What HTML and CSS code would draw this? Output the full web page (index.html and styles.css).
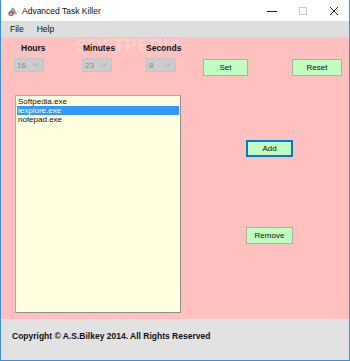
FILE: index.html
```html
<!DOCTYPE html>
<html lang="en">
<head>
    <meta charset="UTF-8">
    <title>Advanced Task Killer</title>
    <link rel="stylesheet" href="styles.css">
</head>
<body>

<div class="window">
    <div class="titlebar">
        <svg class="app-icon" width="11" height="10" viewBox="0 0 11 10">
            <path d="M1 8 L5 2 Q6 1 7 2 L10 8 Z" fill="#8fa6bd"/>
            <circle cx="4" cy="7.5" r="2" fill="none" stroke="#d23a2a" stroke-width="1.2"/>
        </svg>
        <span class="title">Advanced Task Killer</span>
        <div class="win-buttons">
            <span class="win-btn">
                <svg width="10" height="10" viewBox="0 0 10 10"><path d="M0 5.5 H10" stroke="#222" stroke-width="1"/></svg>
            </span>
            <span class="win-btn">
                <svg width="10" height="10" viewBox="0 0 10 10"><rect x="1.5" y="1.5" width="7" height="7" fill="none" stroke="#c8c8c8" stroke-width="1"/></svg>
            </span>
            <span class="win-btn">
                <svg width="10" height="10" viewBox="0 0 10 10"><path d="M1 1 L9 9 M9 1 L1 9" stroke="#222" stroke-width="1"/></svg>
            </span>
        </div>
    </div>

    <div class="menubar">
        <span class="menu-item">File</span>
        <span class="menu-item">Help</span>
    </div>

    <div class="main">
        <div class="watermark">SOFTPEDIA</div>

        <div class="timer-grid">
            <div class="lbl lbl-hours">Hours</div>
            <div class="lbl lbl-minutes">Minutes</div>
            <div class="lbl">Seconds</div>
            <div></div>
            <div></div>

            <div class="combo"><span>16</span><svg width="7" height="4" viewBox="0 0 7 4"><path d="M0.5 0.5 L3.5 3.5 L6.5 0.5" fill="none" stroke="#a8a8a8"/></svg></div>
            <div class="combo"><span>23</span><svg width="7" height="4" viewBox="0 0 7 4"><path d="M0.5 0.5 L3.5 3.5 L6.5 0.5" fill="none" stroke="#a8a8a8"/></svg></div>
            <div class="combo"><span>8</span><svg width="7" height="4" viewBox="0 0 7 4"><path d="M0.5 0.5 L3.5 3.5 L6.5 0.5" fill="none" stroke="#a8a8a8"/></svg></div>
            <button class="btn btn-set">Set</button>
            <button class="btn btn-reset">Reset</button>
        </div>

        <div class="work-area">
            <div class="listbox">
                <div class="list-item">Softpedia.exe</div>
                <div class="list-item selected">iexplore.exe</div>
                <div class="list-item">notepad.exe</div>
            </div>
            <div class="actions">
                <button class="btn btn-add">Add</button>
                <button class="btn btn-remove">Remove</button>
            </div>
        </div>
    </div>

    <div class="footer">
        Copyright &copy; A.S.Bilkey 2014. All Rights Reserved
    </div>
</div>

</body>
</html>
```

FILE: styles.css
```css
body {
    margin: 0;
    padding: 0;
    font-family: "Liberation Sans", Arial, sans-serif;
    background: #ffffff;
}
.window {
    width: 348px;
    height: 360px;
    border: 1px solid #3c8fdc;
    border-top: none;
    display: flex;
    flex-direction: column;
    background: #e2e2e2;
}
.titlebar {
    height: 21px;
    background: #ffffff;
    display: flex;
    align-items: center;
    font-size: 8.5px;
    color: #111;
}
.app-icon {
    margin-left: 6px;
    margin-right: 4px;
}
.title {
    flex: 1;
}
.win-buttons {
    display: flex;
}
.win-btn {
    width: 31px;
    height: 21px;
    display: flex;
    align-items: center;
    justify-content: center;
}
.menubar {
    height: 16px;
    background: #dedede;
    display: flex;
    align-items: center;
    font-size: 8.5px;
    color: #111;
    padding-left: 9px;
}
.menu-item {
    margin-right: 13px;
}
.main {
    position: relative;
    height: 282px;
    background: #ffc0c0;
    overflow: hidden;
}
.watermark {
    position: absolute;
    left: 75px;
    top: 0;
    font-size: 17px;
    line-height: 18px;
    font-weight: bold;
    letter-spacing: 1px;
    color: rgba(255, 255, 255, 0.3);
}
.timer-grid {
    position: relative;
    display: grid;
    grid-template-columns: 68px 64px 57px 89px 50px;
    grid-template-rows: 17px 18px;
    row-gap: 2px;
    padding: 2px 0 0 13px;
    align-items: center;
}
.lbl {
    font-size: 8.5px;
    font-weight: bold;
    color: #111;
}
.lbl-hours {
    margin-left: 7px;
}
.lbl-minutes {
    margin-left: 1px;
}
.combo {
    width: 30px;
    height: 14px;
    border: 1px solid #c4c4c4;
    background: #cccccc;
    display: flex;
    align-items: center;
    justify-content: space-between;
    padding: 0 4px 0 2px;
    box-sizing: border-box;
    font-size: 8px;
    color: #8a8a8a;
    align-self: start;
}
.btn {
    background: #c0ffc0;
    border: 1px solid #adadad;
    font-family: "Liberation Sans", Arial, sans-serif;
    font-size: 8px;
    color: #111;
    padding: 0;
    height: 17px;
}
.btn-set {
    width: 45px;
}
.btn-reset {
    width: 50px;
}
.work-area {
    display: flex;
    margin-top: 19px;
}
.listbox {
    margin-left: 14px;
    width: 166px;
    height: 218px;
    box-sizing: border-box;
    background: #ffffe0;
    border: 1px solid #a9a9a9;
    border-right-color: #8f8f8f;
    border-bottom-color: #8f8f8f;
    padding: 1px;
    font-size: 8px;
    color: #111;
}
.list-item {
    height: 9px;
    line-height: 9px;
    padding-left: 1px;
}
.list-item.selected {
    background: #3399ff;
    color: #ffffff;
}
.actions {
    margin-left: 65px;
    display: flex;
    flex-direction: column;
}
.btn-add {
    width: 47px;
    margin-top: 45px;
    border: 2px solid #0078d7;
}
.btn-remove {
    width: 47px;
    margin-top: 70px;
}
.footer {
    flex: 1;
    background: #e2e2e2;
    font-size: 8.5px;
    font-weight: bold;
    color: #111;
    padding: 12px 0 0 11px;
}
```
